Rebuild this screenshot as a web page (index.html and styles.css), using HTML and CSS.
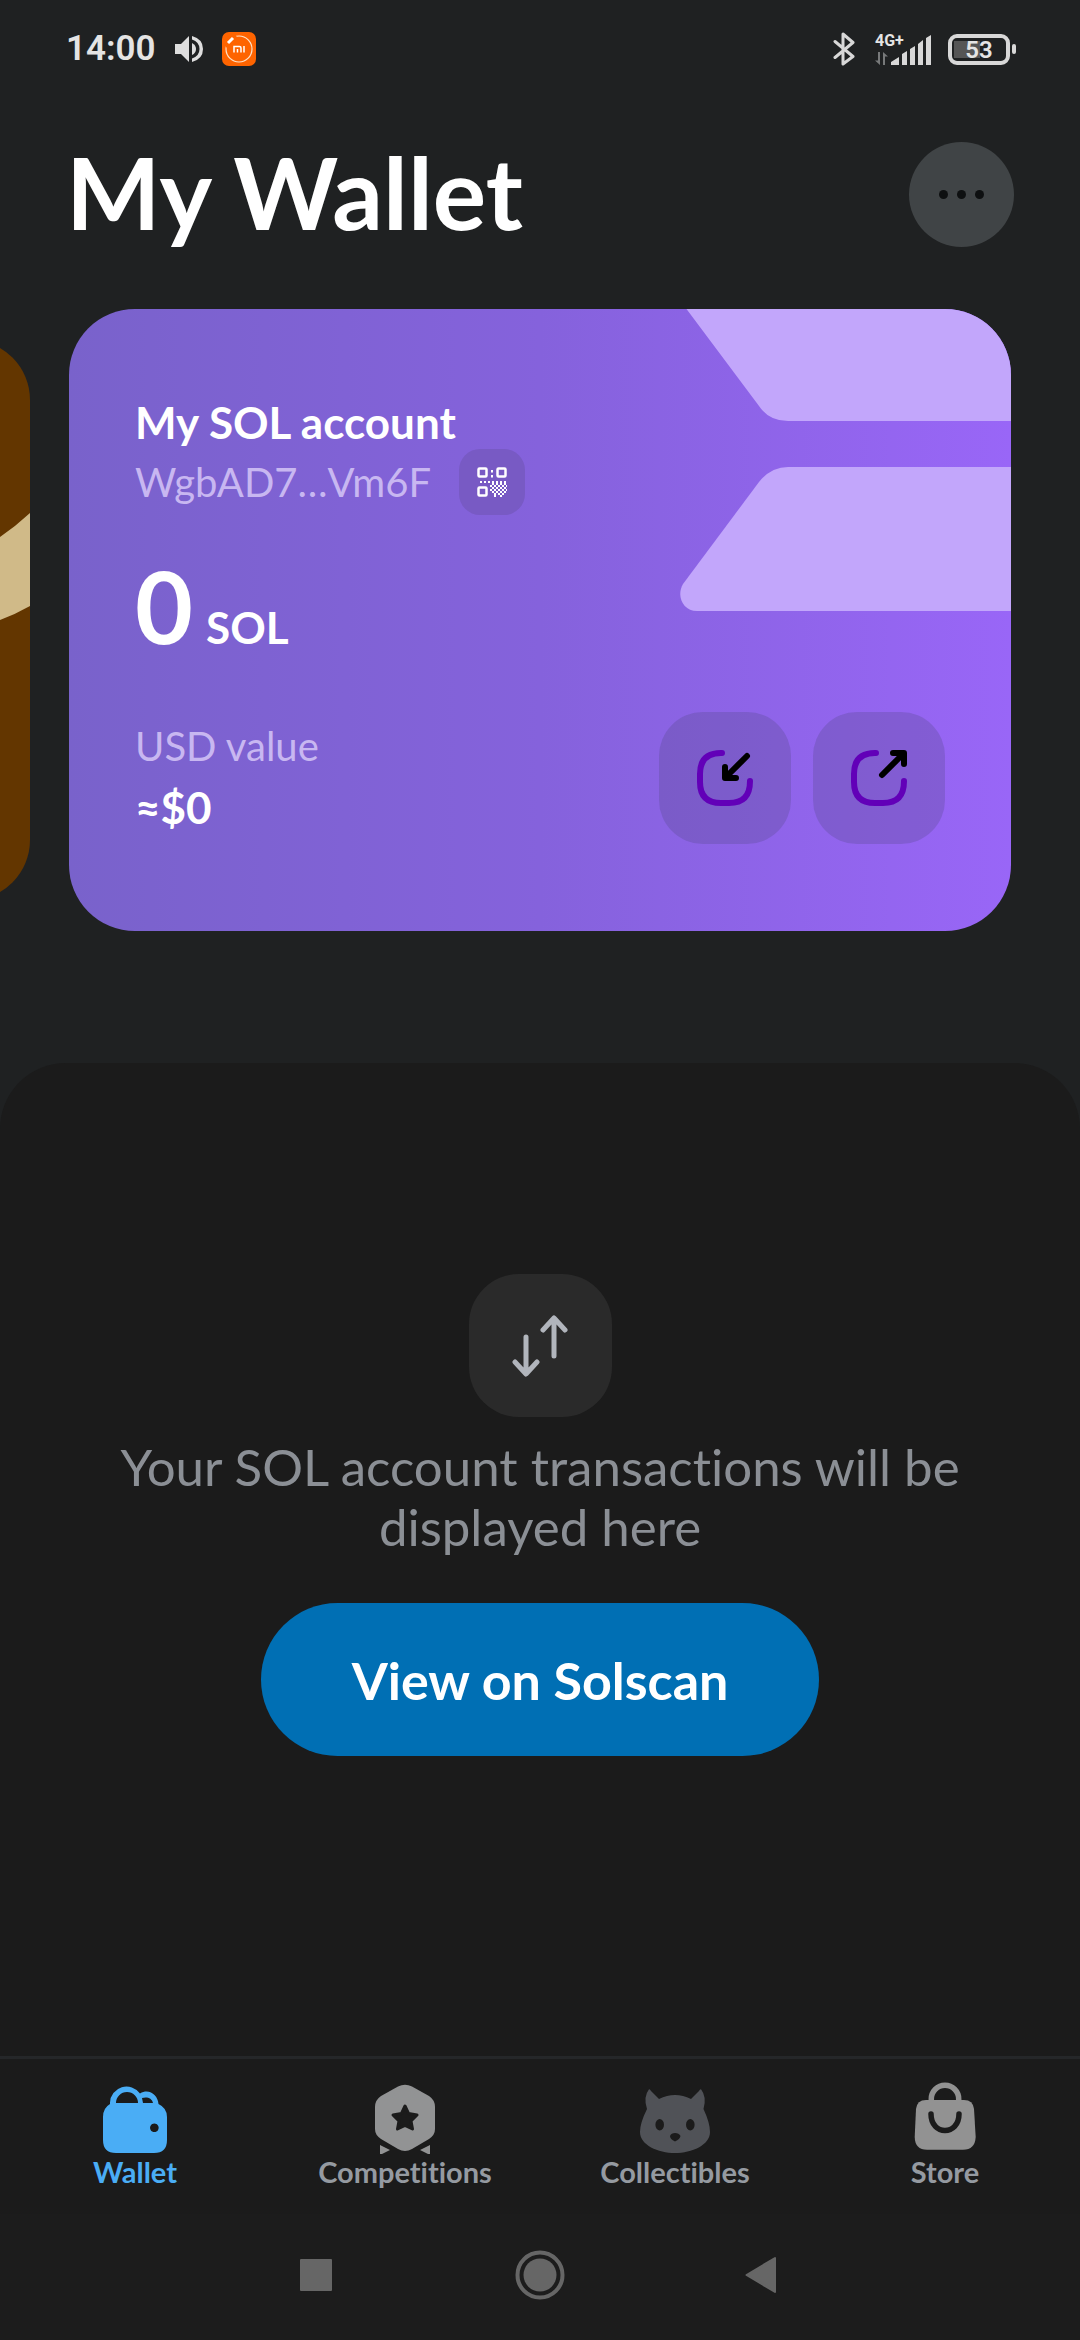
FILE: index.html
```html
<!DOCTYPE html>
<html lang="en">
<head>
<meta charset="utf-8">
<meta name="viewport" content="width=device-width, initial-scale=1">
<title>My Wallet</title>
<link rel="stylesheet" href="styles.css">
</head>
<body>
<div class="status">
  <div class="status-group status-left">
    <span class="clock">14:00</span>
    <svg class="speaker" viewBox="0 0 28 28" width="28" height="28" fill="#dedede"><path d="M0 9H6L14 1V27L6 19H0Z"/><path d="M17 8Q21 10 21 14T17 20Z"/><path d="M17 1Q28 4 28 14T17 27V23.500Q24.500 21 24.500 14T17 4.500Z"/></svg>
    <svg viewBox="0 0 34 34" width="34" height="34"><rect width="34" height="34" rx="7" fill="#fe6400"/><circle cx="17" cy="17" r="13" fill="none" stroke="#ffe3c8" stroke-width="1.200"/><path d="M3 14L13 3" stroke="#fe6400" stroke-width="5"/><path d="M6 11L11 6" stroke="#fff" stroke-width="3"/><path d="M12 20.500V14.500H17.500Q19 14.500 19 16V20.500M15.500 17V20.500M22 14V20.500" fill="none" stroke="#fff" stroke-width="1.500"/></svg>
  </div>
  <div class="status-group status-right">
    <svg class="bluetooth" viewBox="0 0 22 34" width="22" height="34" fill="none" stroke="#d8d8d8" stroke-width="3" stroke-linecap="round" stroke-linejoin="round"><path d="M2 9.500L20 24.500L10 32V2L20 10.500L2 25.500"/></svg>
    <div class="signal">
      <div class="signal-left">
        <span class="network">4G+</span>
        <svg viewBox="0 0 14 13" width="14" height="13" fill="#77797a"><path d="M3 0H5V13L0 8.500H3Z"/><path d="M8 13H10V4.500H13L8 0Z"/></svg>
      </div>
      <svg class="bars" viewBox="0 0 41 30" width="41" height="30" fill="#d8d8d8"><path d="M0 30V27L8 22V30ZM11 19L16 16V30H11ZM19 14L24 11V30H19ZM27 9L32 5V30H27ZM35 3L40 0V30H35Z"/></svg>
    </div>
    <div class="battery"><span class="battery-body">53</span><span class="battery-cap"></span></div>
  </div>
</div>

<header class="header">
  <h1 class="page-title">My Wallet</h1>
  <button class="more" aria-label="More options"><svg viewBox="0 0 45 9" width="45" height="9" fill="#0e1011"><circle cx="4.500" cy="4.500" r="4.500"/><circle cx="22.500" cy="4.500" r="4.500"/><circle cx="40.500" cy="4.500" r="4.500"/></svg></button>
</header>

<main class="main">
  <div class="cards">
    <div class="peek"><div class="peek-card"><svg viewBox="0 0 30 560" width="30" height="560"><path d="M0 197Q16 186 30 173V266Q16 274 0 280Z" fill="#d0ba88"/></svg></div></div>
    <section class="card">
      <svg class="card-art" viewBox="0 0 331 302" width="331" height="302" fill="#c2a6fb"><path d="M6.500 0L79 97Q89 112 108 112H331V0Z"/><path d="M108 158H331V302H17C3 302-4 287 3 275L79 173Q91 158 108 158Z"/></svg>
      <h2 class="account">My SOL account</h2>
      <div class="address-row">
        <span class="muted">WgbAD7…Vm6F</span>
        <button class="qr" aria-label="Show QR code">
          <svg viewBox="0 0 30 30" width="30" height="30" fill="none" stroke="#fff"><g stroke-width="2.500"><rect x="1.500" y="1.500" width="8" height="8" rx="1"/><rect x="20.500" y="1.500" width="8" height="8" rx="1"/><rect x="1.500" y="20.500" width="8" height="8" rx="1"/></g><g stroke-width="2"><path d="M15 3V5.500M15 8V10.500" /><path d="M3 15H30" stroke-dasharray="2 2"/><path d="M15 17H29M15 21H29M15 25H29" stroke-dasharray="2 2"/><path d="M13 19H30M13 23H30M17 27H27" stroke-dasharray="2 2"/><path d="M17 29H21M23 29H26" stroke-dasharray="2 2"/></g></svg>
        </button>
      </div>
      <p class="balance"><span class="amount">0</span> <span class="unit">SOL</span></p>
      <div class="card-foot">
        <div class="value"><span class="muted">USD value</span><span class="usd">≈$0</span></div>
        <div class="actions">
          <button class="action" aria-label="Receive"><svg viewBox="0 0 132 132" width="132" height="132"><path class="frame" d="M63 41H62C47 41 41 49 41 62V70C41 84 48 91 62 91H70C84 91 91 84 91 69"/><path class="arrow" d="M88 44L67 65M66 55V66H77"/></svg></button>
          <button class="action" aria-label="Send"><svg viewBox="0 0 132 132" width="132" height="132"><path class="frame" d="M63 41H62C47 41 41 49 41 62V70C41 84 48 91 62 91H70C84 91 91 84 91 69"/><path class="arrow" d="M69 63L90 42M80 41H91V52"/></svg></button>
        </div>
      </div>
    </section>
  </div>

  <section class="sheet">
    <div class="swap"><svg viewBox="0 0 56 62" width="56" height="62"><path d="M14 22V58M3 47L14 59L25 47M42 41V4M31 15L42 3L53 15"/></svg></div>
    <p class="empty">Your SOL account transactions will be displayed here</p>
    <button class="explore">View on Solscan</button>
  </section>
</main>

<nav class="tabs">
  <a class="tab active" href="#wallet"><svg viewBox="0 -2 72 76" width="72" height="76"><path fill-rule="evenodd" d="M11 20V18.500A16.500 16.500 0 0 1 41 9.500C50 4 59 11 59.500 20Q68 24 68 33V56Q68 69 55 69H17Q4 69 4 56V33Q4 24 11 20ZM17 19H39A11 11 0 0 0 17 19ZM44 19H54C53 14 48 12.500 43 14ZM55.300 39.500A4.300 4.300 0 1 0 55.400 39.500Z"/></svg><span>Wallet</span></a>
  <a class="tab" href="#competitions"><svg viewBox="0 -2 72 76" width="72" height="76" fill="#929394"><path d="M29 2.500Q36-1 43 2.500L60 12Q66 16 66 23V45Q66 51 60 55L43 65Q36 69 29 65L12 55Q6 51 6 45V23Q6 16 12 12Z"/><path d="M11 61L21 66L13 70H11ZM61 61L51 66L59 70H61Z"/><path d="M36 22L39.500 29.500L48 31L42 37L43.500 45L36 41.500L28.500 45L30 37L24 31L32.500 29.500Z" fill="#1b1b1b" stroke="#1b1b1b" stroke-width="3" stroke-linejoin="round"/></svg><span>Competitions</span></a>
  <a class="tab" href="#collectibles"><svg viewBox="0 -2 72 76" width="72" height="76" fill="#505257"><path d="M10 5.300Q11 5 12 7L20 15Q36 7 52 15L60 7Q61 5 62 5.300Q68 13 64.500 25Q71 39 71 48C71 61 53 69 36 69S1 61 1 48Q1 39 8 25Q4 13 10 5.300Z"/><g fill="#1b1b1b"><ellipse cx="20.700" cy="40.700" rx="4.300" ry="5.700"/><ellipse cx="51.300" cy="40.700" rx="4.300" ry="5.700"/><path d="M31 52C32 48 40 48 41.500 52Q41 55 36 57.500Q31 55 31 52Z"/></g></svg><span>Collectibles</span></a>
  <a class="tab" href="#store"><svg viewBox="0 -2 72 76" width="72" height="76" fill="#929292"><path d="M22.300 20V15A13.700 13.700 0 0 1 49.700 15V20" fill="none" stroke="#929292" stroke-width="5.500"/><path d="M17 16H55Q64 16 65 25L66.700 53Q66 65.700 54 65.700H18Q6 65.700 5.700 53L7 25Q8 16 17 16Z"/><path d="M22 30C22 52 50 52 50 30" fill="none" stroke="#1b1b1b" stroke-width="5.500" stroke-linecap="round"/></svg><span>Store</span></a>
</nav>

<div class="system">
  <button aria-label="Recent apps"><svg viewBox="0 0 50 50" width="50" height="50"><rect x="9" y="9" width="32" height="32" rx="1"/></svg></button>
  <button aria-label="Home"><svg viewBox="0 0 50 50" width="50" height="50"><circle cx="25" cy="25" r="22.500" fill="none" stroke="#666" stroke-width="4"/><circle cx="25" cy="25" r="16.500"/></svg></button>
  <button aria-label="Back"><svg viewBox="0 0 50 50" width="50" height="50"><path d="M7.500 25L36 8V42Z" stroke="#666" stroke-width="2" stroke-linejoin="round"/></svg></button>
</div>
</body>
</html>
```
FILE: styles.css
```css
* { box-sizing: border-box; }
body {
  margin: 0;
  min-height: 100vh;
  display: flex;
  flex-direction: column;
  background: #1f2122;
  color: #fff;
  font-family: Lato, "Open Sans", sans-serif;
  font-variant-ligatures: none;
}
h1, h2, p { margin: 0; }
button { border: 0; padding: 0; font: inherit; color: inherit; cursor: pointer; }
svg { display: block; }

.status {
  display: flex;
  justify-content: space-between;
  padding: 32px 64px 0 66px;
  height: 98px;
  font-family: Roboto, sans-serif;
  color: #e4e4e4;
}
.status-group { display: flex; align-items: center; height: 34px; }
.status-left { gap: 19px; }
.status-right { gap: 16px; }
.clock { font-size: 35px; font-weight: 600; line-height: 36px; }
.bluetooth { margin-right: 4px; }
.signal { display: flex; align-items: flex-end; height: 32px; }
.signal-left { display: flex; flex-direction: column; gap: 4px; width: 16px; }
.network { font-size: 16px; line-height: 14px; font-weight: 700; white-space: nowrap; }
.battery { display: flex; align-items: center; gap: 2px; }
.battery-body {
  width: 62px;
  height: 31px;
  border: 4px solid #d8d8d8;
  border-radius: 9px;
  background: linear-gradient(#555, #555) 2px 3px / 26px 17px no-repeat;
  font-size: 24px;
  line-height: 24px;
  font-weight: 600;
  text-align: center;
}
.battery-cap { width: 4px; height: 10px; border-radius: 2px; background: #d8d8d8; }

.header {
  display: flex;
  justify-content: space-between;
  align-items: flex-start;
  padding: 44px 66px 62px;
}
.page-title { font-size: 100px; line-height: 98px; font-weight: 700; }
.more {
  display: grid;
  place-items: center;
  width: 105px;
  height: 105px;
  border-radius: 50%;
  background: #404446;
}

.main { flex: 1; display: flex; flex-direction: column; }
.cards {
  display: grid;
  grid-template-columns: 30px 1fr;
  gap: 39px;
  align-items: center;
  padding-right: 69px;
}
.peek { display: flex; justify-content: flex-end; overflow: hidden; }
.peek-card {
  flex: 0 0 200px;
  display: flex;
  justify-content: flex-end;
  border-radius: 60px;
  background: #633600;
}
.card {
  position: relative;
  overflow: hidden;
  padding: 86px 66px 87px;
  border-radius: 66px;
  background: linear-gradient(90deg, #7962cb, #8562dc 50%, #9966f7);
}
.card-art { position: absolute; top: 0; right: 0; }
.account { font-size: 44px; line-height: 54px; font-weight: 700; }
.muted { font-size: 40px; line-height: 48px; font-weight: 400; color: #c8b7f1; }
.address-row { display: flex; align-items: center; gap: 28px; }
.qr {
  display: grid;
  place-items: center;
  width: 66px;
  height: 66px;
  border-radius: 21px;
  background: #785ac4;
}
.balance { display: flex; align-items: baseline; gap: 13px; margin-top: 36px; font-weight: 700; }
.amount { font-size: 100px; line-height: 108px; }
.unit { font-size: 44px; line-height: 54px; }
.card-foot { display: flex; justify-content: space-between; align-items: center; margin-top: 53px; }
.value { display: flex; flex-direction: column; gap: 10px; }
.usd { font-size: 44px; line-height: 54px; font-weight: 700; }
.actions { display: flex; gap: 22px; }
.action { border-radius: 44px; background: rgba(80, 70, 130, .27); }
.frame, .arrow { fill: none; stroke-width: 6px; stroke-linecap: round; stroke-linejoin: round; }
.frame { stroke: #6200b8; }
.arrow { stroke: #000; }

.sheet {
  flex: 1;
  display: flex;
  flex-direction: column;
  align-items: center;
  margin-top: 132px;
  padding: 211px 66px 66px;
  border-radius: 66px 66px 0 0;
  background: #1b1b1b;
}
.swap {
  display: grid;
  place-items: center;
  width: 143px;
  height: 143px;
  border-radius: 50px;
  background: #2a2a2a;
}
.swap svg { fill: none; stroke: #b1b5bc; stroke-width: 5px; stroke-linecap: round; stroke-linejoin: round; }
.empty {
  margin-top: 20px;
  font-size: 51px;
  line-height: 60px;
  font-weight: 400;
  text-align: center;
  color: #8b8f95;
}
.explore {
  margin-top: 46px;
  padding: 0 91px;
  height: 153px;
  border-radius: 77px;
  background: #006fb4;
  font-size: 52px;
  font-weight: 700;
}

.tabs {
  display: grid;
  grid-template-columns: repeat(4, 1fr);
  height: 158px;
  border-top: 3px solid #252729;
  background: #1b1b1b;
}
.tab {
  display: flex;
  flex-direction: column;
  align-items: center;
  padding-top: 23px;
  color: #959aa1;
  font-size: 29px;
  line-height: 28px;
  font-weight: 700;
  text-decoration: none;
}
.active { color: #4aadf5; fill: #4aadf5; }

.system {
  display: flex;
  justify-content: center;
  gap: 174px;
  padding: 36px 0 40px;
  background: #1c1c1c;
}
.system button { background: none; fill: #666; }
```
